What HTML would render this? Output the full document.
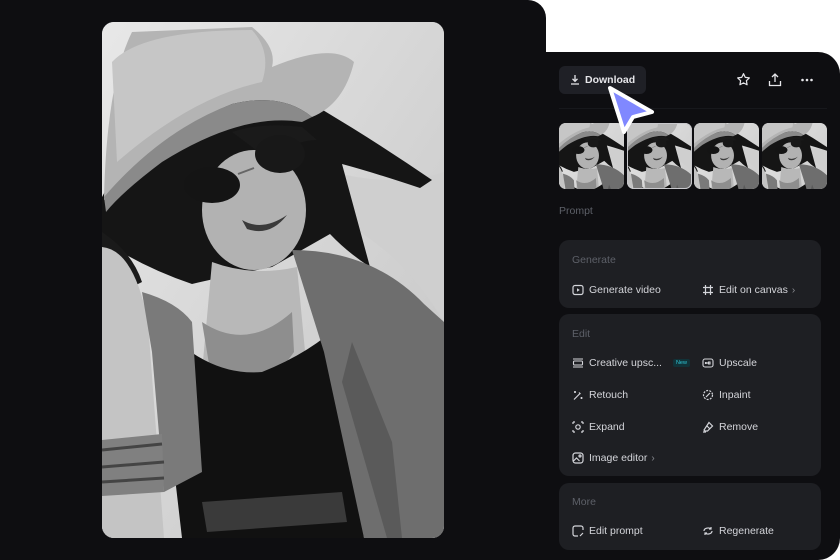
<!DOCTYPE html>
<html><head><meta charset="utf-8">
<style>
*{margin:0;padding:0;box-sizing:border-box}
body{width:840px;height:560px;background:#fff;position:relative;overflow:hidden;font-family:"Liberation Sans",sans-serif}
.left{position:absolute;left:0;top:0;width:546px;height:560px;background:#0e0e11;border-top-right-radius:18px}
.right{position:absolute;left:546px;top:52px;width:294px;height:508px;background:#0e0e11;border-top-right-radius:22px;border-bottom-right-radius:22px}
.photo{position:absolute;left:102px;top:22px;width:342px;height:516px;border-radius:12px;overflow:hidden;background:#ddd}
.dl{position:absolute;left:559px;top:66px;width:87px;height:28px;background:#1f2026;border-radius:6px;color:#e6e6ea;font-size:10.5px;font-weight:bold;line-height:28px;padding-left:26px}
.dl svg{position:absolute;left:11px;top:8px}
.ic{position:absolute;top:72px}
.div{position:absolute;left:559px;top:108px;width:268px;height:1px;background:#17181c}
.th{position:absolute;top:123px;width:65px;height:66px;border-radius:7px;overflow:hidden;background:#888}
.th.sel{outline:1.5px solid #c8c8cc;outline-offset:-1.5px}
.lbl{position:absolute;color:#5d6068;font-size:10.5px}
.card{position:absolute;left:559px;width:262px;background:#1e1f23;border-radius:10px}
.it{position:absolute;color:#d4d5da;font-size:10.5px;white-space:nowrap}
.it svg{position:absolute;left:-17px;top:0px}
.new{display:inline-block;background:#113238;color:#2fc6d6;font-size:5.5px;padding:1px 3px;border-radius:2px;vertical-align:2px;margin-left:11px}
.chev{color:#8a8c92;margin-left:4px;font-size:10px}
</style></head><body>
<svg width="0" height="0" style="position:absolute">
<defs>
<linearGradient id="bg" x1="0" y1="0" x2="1" y2="1"><stop offset="0" stop-color="#e8e8e8"/><stop offset="1" stop-color="#c4c4c4"/></linearGradient>
<symbol id="pic" viewBox="0 0 342 516">
<rect width="342" height="516" fill="url(#bg)"/>
<path d="M200 140 Q280 170 342 150 L342 300 Q300 230 240 200Z" fill="#cfcfcf"/>
<path d="M30 120 Q100 65 190 70 Q260 110 330 158 L318 166 Q270 150 240 142 L268 245 Q245 230 228 212 L170 245 Q120 255 90 262 Q40 245 0 218 L0 175 Z" fill="#151515"/>
<path d="M0 210 Q30 230 40 260 L20 270 L0 260Z" fill="#1a1a1a"/>
<ellipse cx="152" cy="188" rx="52" ry="60" fill="#b2b2b2"/>
<path d="M2 175 Q5 60 30 10 L150 5 Q175 25 170 45 Q230 20 252 40 Q242 82 210 95 Q180 70 130 82 Q60 110 2 178 Z" fill="#b4b4b4"/>
<path d="M10 40 Q40 8 150 8 Q170 30 160 60 Q90 75 15 140Z" fill="#c6c6c6"/>
<path d="M2 175 Q60 108 130 82 Q180 70 210 95 L200 100 Q140 90 60 140 Q20 170 4 190Z" fill="#8a8a8a"/>
<path d="M130 110 Q160 100 200 105 L215 118 Q190 118 170 140Z" fill="#1a1a1a"/>
<ellipse cx="110" cy="163" rx="28" ry="18" fill="#141414"/>
<ellipse cx="178" cy="132" rx="25" ry="19" fill="#181818"/>
<path d="M136 152 L152 146" stroke="#666" stroke-width="2"/>
<path d="M140 198 Q160 210 185 193 Q168 215 145 207Z" fill="#3a3a3a"/>
<path d="M110 240 Q150 255 195 245 L205 350 Q155 385 100 350Z" fill="#b8b8b8"/>
<path d="M100 300 Q145 330 190 290 L192 330 Q150 390 110 360 Z" fill="#8e8e8e"/>
<path d="M55 300 Q105 355 160 350 Q210 330 240 300 L262 516 L80 516 Z" fill="#111"/>
<path d="M190 228 Q270 228 322 282 L342 300 L342 516 L262 516 L222 330 Z" fill="#6e6e6e"/>
<path d="M250 320 L290 420 L300 516 L285 516 L240 360Z" fill="#5a5a5a"/>
<path d="M0 225 Q32 228 46 300 L62 516 L0 516Z" fill="#c4c4c4"/>
<path d="M40 270 Q75 280 90 300 L100 450 L62 470 L50 330Z" fill="#7a7a7a"/>
<path d="M0 418 L60 412 L62 470 L0 474Z" fill="#808080"/>
<path d="M0 428 L60 422M0 445 L62 440M0 460 L62 456" stroke="#444" stroke-width="3"/>
<path d="M100 480 L240 470 L245 500 L105 510Z" fill="#3a3a3a"/>
</symbol>
</defs>
</svg>
<div class="left"></div>
<div class="right"></div>
<div class="photo"><svg width="342" height="516" viewBox="0 0 342 516"><use href="#pic" width="342" height="516"/></svg></div>

<div class="dl"><svg width="10" height="11" viewBox="0 0 10 11" fill="none" stroke="#e6e6ea" stroke-width="1.3"><path d="M5 1v6M2.5 4.8L5 7.3 7.5 4.8M1 10h8"/></svg>Download</div>
<svg class="ic" style="left:736px" width="15" height="15" viewBox="0 0 16 16" fill="none" stroke="#e6e6ea" stroke-width="1.3" stroke-linejoin="round"><path d="M8 1.8l1.9 3.9 4.3.6-3.1 3 .7 4.3L8 11.6l-3.8 2 .7-4.3-3.1-3 4.3-.6z"/></svg>
<svg class="ic" style="left:768px" width="14" height="15" viewBox="0 0 14 15" fill="none" stroke="#e6e6ea" stroke-width="1.3"><path d="M7 10V2M4 5l3-3 3 3M1.5 9v4.5h11V9"/></svg>
<svg class="ic" style="left:800px" width="14" height="15" viewBox="0 0 14 15" fill="#e6e6ea"><circle cx="2.5" cy="8" r="1.3"/><circle cx="7" cy="8" r="1.3"/><circle cx="11.5" cy="8" r="1.3"/></svg>
<div class="div"></div>

<div class="th" style="left:559px"><svg width="65" height="66" viewBox="20 40 300 300" preserveAspectRatio="xMidYMid slice"><use href="#pic" width="342" height="516"/></svg></div>
<div class="th sel" style="left:627px"><svg width="65" height="66" viewBox="20 40 300 300" preserveAspectRatio="xMidYMid slice"><use href="#pic" width="342" height="516"/></svg></div>
<div class="th" style="left:694px"><svg width="65" height="66" viewBox="20 40 300 300" preserveAspectRatio="xMidYMid slice"><use href="#pic" width="342" height="516"/></svg></div>
<div class="th" style="left:762px"><svg width="65" height="66" viewBox="20 40 300 300" preserveAspectRatio="xMidYMid slice"><use href="#pic" width="342" height="516"/></svg></div>

<svg style="position:absolute;left:602px;top:82px" width="56" height="54" viewBox="0 0 56 54"><path d="M8 6 L50 30 L31 35 L22 50 Z" fill="#8088ff" stroke="#fff" stroke-width="4" stroke-linejoin="round"/></svg>

<div class="lbl" style="left:559px;top:205px">Prompt</div>

<div class="card" style="top:240px;height:68px"></div>
<div class="lbl" style="left:572px;top:254px">Generate</div>
<div class="it" style="left:589px;top:284px"><svg width="12" height="12" viewBox="0 0 12 12" fill="none" stroke="#d4d5da" stroke-width="1.2"><rect x="1" y="1.5" width="10" height="9" rx="2"/><path d="M5 4.2v3.6L7.8 6z" fill="#d4d5da" stroke="none"/></svg>Generate video</div>
<div class="it" style="left:719px;top:284px"><svg width="12" height="12" viewBox="0 0 12 12" fill="none" stroke="#d4d5da" stroke-width="1.2"><path d="M3.5 1v10M8.5 1v10M1 3.5h10M1 8.5h10"/></svg>Edit on canvas<span class="chev">›</span></div>

<div class="card" style="top:314px;height:162px"></div>
<div class="lbl" style="left:572px;top:328px">Edit</div>
<div class="it" style="left:589px;top:357px"><svg width="12" height="12" viewBox="0 0 12 12" fill="none" stroke="#d4d5da" stroke-width="1.1"><path d="M1 2h10M1 10h10"/><rect x="1.5" y="4" width="9" height="4" rx="1"/></svg>Creative upsc...<span class="new">New</span></div>
<div class="it" style="left:719px;top:357px"><svg width="12" height="12" viewBox="0 0 12 12" fill="none" stroke="#d4d5da" stroke-width="1.1"><rect x="1" y="2" width="10" height="8" rx="2"/><path d="M3.5 5v2M5 5v2M3.5 6h1.5M6.5 5h1.5v2h-1.5z"/></svg>Upscale</div>
<div class="it" style="left:589px;top:389px"><svg width="12" height="12" viewBox="0 0 12 12" fill="none" stroke="#d4d5da" stroke-width="1.2"><path d="M2 10.5L8 4.5M7 3.5l1.5 1.5M3 2v2M2 3h2M9.5 8v2M8.5 9h2"/></svg>Retouch</div>
<div class="it" style="left:719px;top:389px"><svg width="12" height="12" viewBox="0 0 12 12" fill="none" stroke="#d4d5da" stroke-width="1.2" stroke-dasharray="2 1.2"><circle cx="6" cy="6" r="4.5"/><path d="M4 8l4-4" stroke-dasharray="none"/></svg>Inpaint</div>
<div class="it" style="left:589px;top:421px"><svg width="12" height="12" viewBox="0 0 12 12" fill="none" stroke="#d4d5da" stroke-width="1.2"><circle cx="6" cy="6" r="2.2"/><path d="M1 1h2M1 1v2M11 1h-2M11 1v2M1 11h2M1 11v-2M11 11h-2M11 11v-2"/></svg>Expand</div>
<div class="it" style="left:719px;top:421px"><svg width="12" height="12" viewBox="0 0 12 12" fill="none" stroke="#d4d5da" stroke-width="1.2"><path d="M7 1.5l3.5 3.5-5 5H3L2 9l5-7.5zM4.5 4.5l3 3M1 11h3"/></svg>Remove</div>
<div class="it" style="left:589px;top:452px"><svg width="12" height="12" viewBox="0 0 12 12" fill="none" stroke="#d4d5da" stroke-width="1.2"><rect x="1" y="1" width="10" height="10" rx="2.5"/><path d="M1.5 9l3-3 3 3" /><circle cx="8" cy="4" r="1"/></svg>Image editor<span class="chev">›</span></div>

<div class="card" style="top:483px;height:67px"></div>
<div class="lbl" style="left:572px;top:496px">More</div>
<div class="it" style="left:589px;top:525px"><svg width="12" height="12" viewBox="0 0 12 12" fill="none" stroke="#d4d5da" stroke-width="1.2"><path d="M11 5V3a2 2 0 00-2-2H3a2 2 0 00-2 2v6a2 2 0 002 2h3M8 11l3-3"/></svg>Edit prompt</div>
<div class="it" style="left:719px;top:525px"><svg width="12" height="12" viewBox="0 0 12 12" fill="none" stroke="#d4d5da" stroke-width="1.2"><path d="M2 6a4 3 0 017-2M10 6a4 3 0 01-7 2M9 2v2H7M3 10V8h2"/></svg>Regenerate</div>
</body></html>
